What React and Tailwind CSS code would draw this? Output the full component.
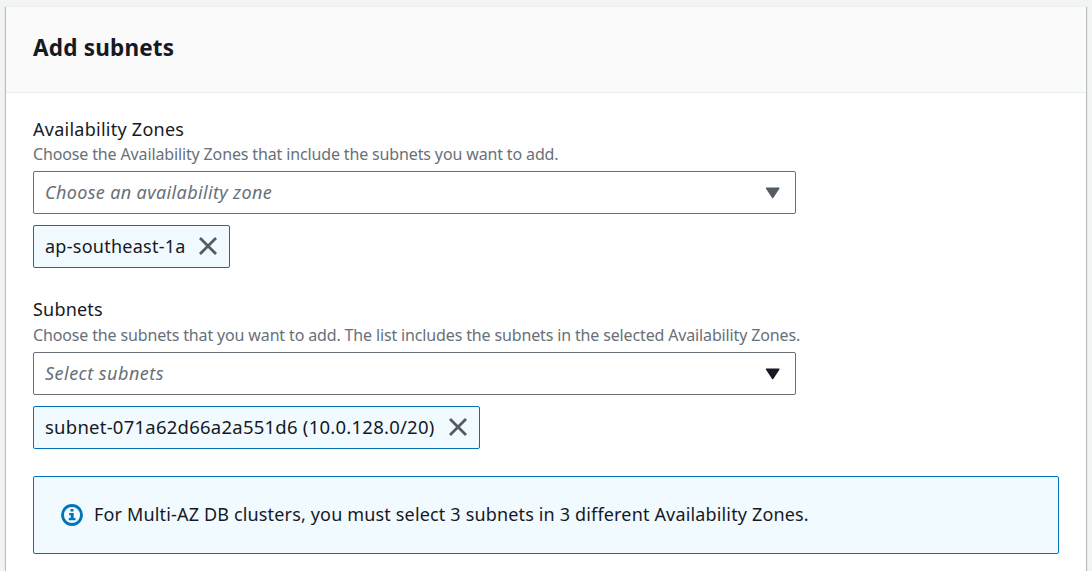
function Close() {
  return (
    <svg width="18" height="18" viewBox="0 0 18 18" className="relative -top-px shrink-0" aria-hidden="true">
      <path d="M1 1 17 17M17 1 1 17" stroke="#545b64" strokeWidth="2.8" fill="none" />
    </svg>
  );
}

function Select({ placeholder, caretClass, textClass }) {
  return (
    <div className="flex h-[43px] w-[763px] items-center justify-between rounded-[2px] border border-[#687078] bg-white pr-[15px] pl-[11px]">
      <span className={`whitespace-nowrap italic text-[#687078] ${textClass}`}>{placeholder}</span>
      <svg width="15" height="12" viewBox="0 0 15 12" className={caretClass} aria-hidden="true">
        <path d="M1.5 1.2h12.4L7.7 10.6z" fill="currentColor" stroke="currentColor" strokeWidth="1.4" strokeLinejoin="round" />
      </svg>
    </div>
  );
}

function Token({ children, className, textClass }) {
  return (
    <div className={`mt-[11px] flex h-[43px] items-center justify-between rounded-[2px] border border-[#0073bb] bg-[#f1faff] pr-[12px] pl-[11px] ${className}`}>
      <span className={`whitespace-nowrap ${textClass}`}>{children}</span>
      <Close />
    </div>
  );
}

export default function App() {
  return (
    <div className="h-[571px] overflow-hidden bg-[#f2f3f3] px-[6px] pt-[6px] font-['Noto_Sans',sans-serif] text-[18px] text-[#16191f]">
      <section className="h-[600px] w-[1080px] border-t border-[#eaeded] bg-white shadow-[0_1px_1px_0_rgba(0,28,36,0.3),1px_1px_1px_0_rgba(0,28,36,0.2),-1px_1px_1px_0_rgba(0,28,36,0.2)]">
        <header className="flex h-[86px] items-center border-b border-[#eaeded] bg-[#fafafa] px-[27px] pb-[3px]">
          <h2 className="whitespace-nowrap text-[22.5px] leading-[30px] font-bold tracking-[0.2px]">Add subnets</h2>
        </header>
        <div className="px-[27px] pt-[23px]">
          <div className="h-[26px] leading-[26px] whitespace-nowrap tracking-[0.26px]">Availability Zones</div>
          <div className="h-[29px] text-[16px] leading-[24px] whitespace-nowrap text-[#687078] tracking-[-0.14px]">Choose the Availability Zones that include the subnets you want to add.</div>
          <Select placeholder="Choose an availability zone" caretClass="text-[#545b64]" textClass="tracking-[0.36px]" />
          <Token className="w-[197px]" textClass="tracking-[0.26px]">ap-southeast-1a</Token>
          <div className="mt-[28px] h-[26px] leading-[26px] whitespace-nowrap tracking-[0.2px]">Subnets</div>
          <div className="h-[30px] text-[16px] leading-[26px] whitespace-nowrap text-[#687078] tracking-[-0.145px]">Choose the subnets that you want to add. The list includes the subnets in the selected Availability Zones.</div>
          <Select placeholder="Select subnets" caretClass="text-[#16191f]" textClass="tracking-[0.48px]" />
          <Token className="w-[447px]" textClass="text-[18.5px] tracking-[0.24px] -mt-[2px]">subnet-071a62d66a2a551d6 (10.0.128.0/20)</Token>
          <div className="mt-[27px] flex h-[78px] items-center rounded-[2px] border border-[#0073bb] bg-[#f1faff] pl-[27px]">
            <svg width="22" height="22" viewBox="0 0 22 22" className="shrink-0" aria-hidden="true">
              <circle cx="11" cy="11" r="9.5" fill="none" stroke="#0073bb" strokeWidth="2.8" />
              <path d="M9.5 5h3v2.6h-3zM8.2 9h4.5v5h1.8v2.2H7.8V14h1.9v-2.8H8.2z" fill="#0073bb" />
            </svg>
            <span className="-mt-[2px] ml-[11px] whitespace-nowrap tracking-[0.16px]">For Multi-AZ DB clusters, you must select 3 subnets in 3 different Availability Zones.</span>
          </div>
        </div>
      </section>
    </div>
  );
}
